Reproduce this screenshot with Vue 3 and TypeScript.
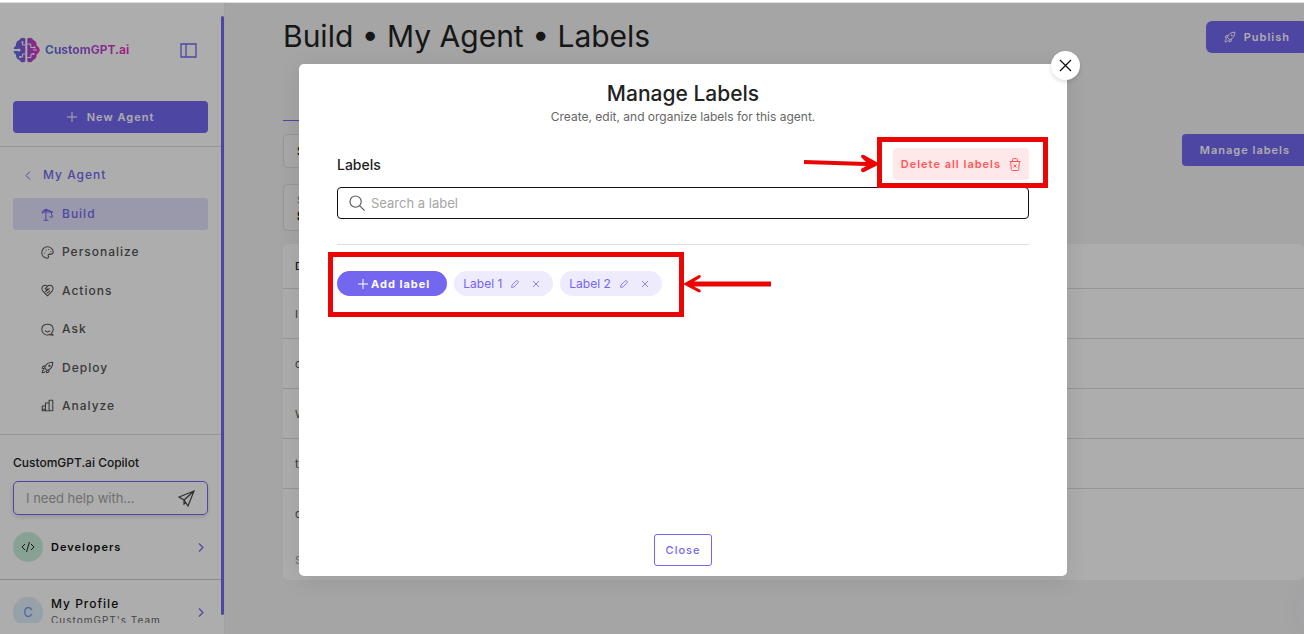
<script setup lang="ts">
import { ref } from 'vue'

interface NavItem {
  name: string
  icon: string[]
  active?: boolean
}

const rocket = [
  'M4.5 8.5C5.5 4.5 9 1.5 14.5 1.5c0 5.500-3 9-7 10z',
  'M5.500 6 2.500 6.500 1.500 9l2.800.4M10 10.500 9.500 13.500 7 14.500 6.600 11.700',
  'M3.500 10.500c-1.500.6-2 2-2 4 2 0 3.400-.5 4-2M9.800 5.200h1.200v1.200h-1.200z',
]

const navItems: NavItem[] = [
  {
    name: 'Build',
    active: true,
    icon: ['M6 15V1.500M3 15h6M1 5h14M1 5 6 1.500 14 5M2 5v2M13 5v3.500M13 8.500c1.500 1 1.500 3-.5 3-1 0-1.500-.6-1.500-1.300'],
  },
  {
    name: 'Personalize',
    icon: ['M8 15C4 15 1 12 1 8s3-7 7-7 7 2.800 7 6c0 2-1.500 3-3 3h-1.500C9 10 8.500 11 9 12.200 9.600 13.500 9.300 15 8 15z', 'M4.100 8.500h1.200M5.500 5.200h1.200M9 4.400h1.200M11.500 6.700h1.200'],
  },
  {
    name: 'Actions',
    icon: ['M8 14.500 2.300 8.700C-.5 5.500 1.800 1.500 5 1.500c1.500 0 2.400.6 3 1.500.6-.9 1.500-1.500 3-1.500 3.200 0 5.500 4 2.700 7.200z', 'M8 3 5.200 5.700c.7 1.300 2.200 1 3-.2M5 9.500 10.500 5.500M7 11.500l4-3'],
  },
  {
    name: 'Ask',
    icon: ['M12.500 12.800 15 15l-4.300-.7C6 16 1 13 1 8s3-6.500 7-6.500S15 4 15 8c0 1.800-.9 3.600-2.500 4.800z', 'M4.800 9.500c1.800 1.700 4.600 1.700 6.400 0'],
  },
  { name: 'Deploy', icon: rocket },
  {
    name: 'Analyze',
    icon: ['M1 14.500h14M1.500 14.500V8.500h4v6M5.500 14.500V5h4.500v9.500M10 14.500v-13h4.500v13M2 12.500h3'],
  },
]

const rows = ['I', 'c', 'W', 't', 'c']
const labels = ref(['Label 1', 'Label 2'])
const search = ref('')
const question = ref('')
</script>

<template>
  <div class="page">
    <aside class="sidebar">
      <div class="side-content">
        <div class="brand-row">
          <a class="brand" href="#">
            <svg class="brain" viewBox="0 0 27 26" aria-hidden="true">
              <defs>
                <linearGradient id="brand-fill" gradientUnits="userSpaceOnUse" x1="0" y1="0" x2="27" y2="0">
                  <stop offset="0" stop-color="#5578e6" />
                  <stop offset=".4" stop-color="#8658dc" />
                  <stop offset="1" stop-color="#f02bbd" />
                </linearGradient>
              </defs>
              <path fill="url(#brand-fill)" d="M12.300 1.500C10 0 7.500.6 6.500 3 4 3.500 2.700 5.800 3 8.500 1.500 9.500.8 11 .6 12H5v2H.6C.8 15.500 1.500 16.500 3 17.500c-.3 2.500 1 4.800 3.500 5.500 1 2.400 3.500 3 5.800 1.500zM14.300 1.500c2.300-1.500 4.800-.9 5.800 1.500 2.500.5 3.800 2.800 3.500 5.500 1.800 1 2.900 2.800 3.200 4.500-.3 1.700-1.400 3.500-3.200 4.500.3 2.500-1 4.800-3.500 5.500-1 2.400-3.500 3-5.800 1.500z" />
              <path fill="none" stroke="#fff" d="M12.300 8H9.500V5.500M12.300 17H9.500v3H7M14.300 7h3.500v3.500h3.500M14.300 20.500H18v-3.500h2.500M24 13h-4" />
              <g fill="#fff"><circle cx="6" cy="13" r="1.500" /><circle cx="9.500" cy="5.300" r="1.100" /><circle cx="7" cy="20" r="1" /><circle cx="20.500" cy="17" r="1.100" /><circle cx="21.500" cy="10.500" r="1.100" /></g>
            </svg>
            <span class="brand-name">CustomGPT.ai</span>
          </a>
          <button class="plain" type="button" aria-label="Toggle sidebar">
            <svg width="17" height="15" viewBox="0 0 17 15" class="line purple"><path d="M1 1h15v13H1zM6 1v13" stroke-width="1.300" /></svg>
          </button>
        </div>

        <button class="primary new-agent" type="button">
          <svg width="10" height="10" viewBox="0 0 10 10" class="line"><path d="M5 0v10M0 5h10" /></svg>
          New Agent
        </button>

        <div class="nav-block">
          <a class="back" href="#">
            <svg width="6" height="9" viewBox="0 0 6 9" class="line"><path d="M5 .5 1 4.500 5 8.500" /></svg>
            My Agent
          </a>
          <nav class="nav">
            <a v-for="item in navItems" :key="item.name" href="#" class="nav-item" :class="{ active: item.active }">
              <svg width="13" height="13" viewBox="0 0 16 16" class="line nav-icon"><path v-for="d in item.icon" :key="d" :d="d" /></svg>
              {{ item.name }}
            </a>
          </nav>
        </div>

        <div class="copilot">
          <label for="copilot">CustomGPT.ai Copilot</label>
          <div class="ask-box">
            <input id="copilot" v-model="question" type="text" placeholder="I need help with..." />
            <button class="plain send" type="button" aria-label="Send">
              <svg width="17" height="17" viewBox="0 0 17 17" class="line"><path d="M16 1 1 7l5 3 4 6zM16 1 6 10M6 10v4l2-1.500" stroke-width="1.200" /></svg>
            </button>
          </div>
          <a class="side-link" href="#">
            <span class="disc green"><svg width="14" height="12" viewBox="0 0 14 12" class="line"><path d="M4 3 1 6l3 3M10 3l3 3-3 3M8.500 1l-3 10" /></svg></span>
            <span class="strong">Developers</span>
            <svg width="6" height="9" viewBox="0 0 6 9" class="line purple"><path d="M1 .5 5 4.500 1 8.500" stroke-width="1.200" /></svg>
          </a>
        </div>

        <a class="side-link profile" href="#">
          <span class="disc blue">C</span>
          <span class="who"><span class="name">My Profile</span><span class="team">CustomGPT's Team</span></span>
          <svg width="6" height="9" viewBox="0 0 6 9" class="line purple"><path d="M1 .5 5 4.500 1 8.500" stroke-width="1.200" /></svg>
        </a>
      </div>
      <div class="scroll-bar"></div>
    </aside>

    <main class="main">
      <header class="head">
        <h1>Build • My Agent • Labels</h1>
        <button class="primary publish" type="button">
          <svg width="12" height="12" viewBox="0 0 16 16" class="line nav-icon"><path v-for="d in rocket" :key="d" :d="d" /></svg>
          Publish
        </button>
      </header>
      <div class="tab-line"></div>
      <div class="tools">
        <button class="field" type="button">S</button>
        <button class="primary" type="button">Manage labels</button>
      </div>
      <button class="field tall" type="button"><span>S</span><b>S</b></button>
      <table class="docs">
        <thead><tr><th scope="col">D</th></tr></thead>
        <tbody><tr v-for="(row, i) in rows" :key="i"><td>{{ row }}</td></tr></tbody>
        <tfoot><tr><td>S</td></tr></tfoot>
      </table>
      <div class="chat-bubble"></div>
    </main>

    <div class="overlay">
      <section class="modal" role="dialog" aria-modal="true" aria-labelledby="modal-title">
        <button class="close-x" type="button" aria-label="Close dialog">
          <svg width="11" height="11" viewBox="0 0 11 11" class="line"><path d="m0 0 11 11M11 0 0 11" stroke-width="1.300" /></svg>
        </button>
        <h2 id="modal-title">Manage Labels</h2>
        <p class="sub">Create, edit, and organize labels for this agent.</p>
        <div class="label-head">
          <label for="search">Labels</label>
          <button class="delete" type="button">
            Delete all labels
            <svg width="12" height="13" viewBox="0 0 12 13" class="line"><path d="M.5 3.500h11M1.700 3.500l.6 8q.1 1 1 1h5.400q.9 0 1-1l.6-8M3.500 3.500V1.700Q3.500.6 4.500.6h3q1 0 1 1.100v1.800M4.600 6.500l2.800 3M7.400 6.500l-2.800 3" /></svg>
          </button>
        </div>
        <div class="search-box">
          <svg width="16" height="16" viewBox="0 0 17 17" class="line"><circle cx="7" cy="7" r="6" stroke-width="1.200" /><path d="m11.500 11.500 5 5" stroke-width="1.200" /></svg>
          <input id="search" v-model="search" type="text" placeholder="Search a label" />
        </div>
        <div class="chips">
          <button class="add" type="button">
            <svg width="10" height="10" viewBox="0 0 10 10" class="line"><path d="M5 0v10M0 5h10" /></svg>
            Add label
          </button>
          <span v-for="label in labels" :key="label" class="chip">
            {{ label }}
            <button class="plain" type="button" :aria-label="`Edit ${label}`">
              <svg width="8" height="8" viewBox="0 0 8 8" class="line"><path d="M.6 7.400 1 5 5.200.9Q6 .3 6.800 1t.2 1.800L3 7z" stroke-width=".8" /></svg>
            </button>
            <button class="plain remove" type="button" :aria-label="`Remove ${label}`">
              <svg width="6" height="6" viewBox="0 0 6 6" class="line"><path d="m0 0 6 6M6 0 0 6" stroke-width=".8" /></svg>
            </button>
          </span>
        </div>
        <button class="close" type="button">Close</button>

        <div class="mark mark-delete"></div>
        <div class="mark mark-chips"></div>
        <svg class="arrow arrow-delete" viewBox="0 0 76 20" aria-hidden="true"><path d="M0 7 62 9 57 4Q57 1 60 2L76 11 60 19Q57 20 57 16L62 13 0 11z" fill="#eb0606" /></svg>
        <svg class="arrow arrow-chips" viewBox="0 0 88 20" aria-hidden="true"><path d="M88 7.500H11L17 4Q19 1 16 1L0 10 16 18.500Q19 18 17 15.500L11 12.500H88z" fill="#eb0606" /></svg>
      </section>
    </div>
  </div>
</template>

<style>
body {
  margin: 0;
  overflow: hidden;
}
</style>

<style scoped>
* {
  box-sizing: border-box;
}
.page {
  position: relative;
  display: flex;
  height: 100vh;
  padding-top: 3px;
  overflow: hidden;
  background: #fff;
  color: #222;
  font: 13px/16px Inter, "Liberation Sans", sans-serif;
}
button,
input {
  margin: 0;
  padding: 0;
  border: 0;
  background: none;
  color: inherit;
  font: inherit;
  letter-spacing: inherit;
}
input {
  outline: 0;
  flex: 1;
  min-width: 0;
}
input::placeholder {
  color: #a5a5a5;
  opacity: 1;
}
a {
  color: inherit;
  text-decoration: none;
}
.line {
  flex: none;
  fill: none;
  stroke: currentColor;
  display: block;
  overflow: visible;
}
.nav-icon {
  stroke-width: 1.300;
  stroke-linejoin: round;
}
.purple {
  color: #7367f0;
}
.primary {
  display: flex;
  align-items: center;
  justify-content: center;
  height: 32px;
  padding: 0 18px;
  border-radius: 4px;
  background: #7367f0;
  color: #fff;
  font-size: 11px;
  font-weight: 600;
  letter-spacing: 1px;
}

.sidebar {
  display: flex;
  flex: none;
  width: 225px;
  border-right: 1px solid #eee;
  padding-bottom: 11px;
  background: #fff;
}
.side-content {
  flex: 1;
  min-width: 0;
  overflow: hidden;
}
.scroll-bar {
  width: 3px;
  margin: 13px 0 8px;
  border-radius: 2px;
  background: #7367f0;
}
.brand-row {
  display: flex;
  align-items: center;
  justify-content: space-between;
  height: 94px;
  padding: 0 24px 0 13px;
}
.brand {
  display: flex;
  align-items: center;
  gap: 5px;
}
.brain {
  width: 27px;
  height: 26px;
}
.brand-name {
  background: linear-gradient(90deg, #4b76e0, #a450dd 50%, #f02bbd);
  background-clip: text;
  color: transparent;
  font-size: 12px;
  font-weight: 700;
}
.new-agent {
  width: calc(100% - 26px);
  margin: 4px 13px 13px;
  gap: 10px;
}
.nav-block {
  border-top: 1px solid #ddd;
  border-bottom: 1px solid #ddd;
  padding: 12px 13px;
}
.back {
  display: flex;
  align-items: center;
  gap: 12px;
  height: 32px;
  padding-left: 12px;
  color: #7367f0;
  font-size: 12px;
  font-weight: 500;
  letter-spacing: 1px;
}
.nav {
  display: flex;
  flex-direction: column;
  justify-content: space-between;
  height: 224px;
  margin-top: 7px;
}
.nav-item {
  display: flex;
  align-items: center;
  gap: 8px;
  height: 32px;
  padding-left: 28px;
  border-radius: 3px;
  color: #555;
  font-size: 12px;
  font-weight: 500;
  letter-spacing: 1px;
}
.nav-item.active {
  background: #e3e0fc;
  color: #7367f0;
}
.copilot {
  display: flex;
  flex-direction: column;
  padding: 20px 13px 17px;
  font-size: 12px;
}
.copilot label {
  font-weight: 500;
}
.ask-box {
  display: flex;
  align-items: center;
  height: 34px;
  margin: 10px 0 17px;
  padding: 0 12px;
  border: 1px solid #7367f0;
  border-radius: 5px;
  box-shadow: 0 2px 4px #0002;
  font-size: 13px;
}
.send {
  color: #444;
}
.side-link {
  display: flex;
  align-items: center;
  gap: 8px;
  padding-right: 4px;
}
.disc {
  display: grid;
  flex: none;
  place-items: center;
  width: 30px;
  height: 30px;
  border-radius: 50%;
}
.green {
  background: #c8eedc;
}
.blue {
  background: #dfedfa;
  color: #7197f0;
  font-size: 13px;
}
.strong,
.who {
  flex: 1;
  color: #111;
  font-weight: 600;
  letter-spacing: 1px;
}
.strong {
  font-size: 11px;
}
.name {
  font-size: 12px;
  font-weight: 500;
}
.who {
  display: flex;
  flex-direction: column;
}
.team {
  color: #666;
  font-size: 10px;
  font-weight: 400;
}
.profile {
  border-top: 1px solid #ccc;
  padding: 16px 17px 0 13px;
}

.main {
  position: relative;
  flex: 1;
  min-width: 0;
  padding-left: 58px;
  overflow: hidden;
  background: #f3f3f3;
}
.head,
.tools {
  display: flex;
  justify-content: space-between;
  margin-right: -4px;
}
.head {
  height: 117px;
  padding-top: 18px;
}
h1 {
  margin: 0;
  font-size: 30px;
  font-weight: 400;
  line-height: 30px;
}
.publish {
  border-radius: 6px;
  gap: 8px;
}
.tab-line {
  width: 120px;
  height: 1px;
  margin-bottom: 13px;
  background: #7367f0;
}
.tools {
  height: 50px;
}
.field {
  width: 400px;
  height: 34px;
  padding: 0 13px;
  border: 1px solid #ddd;
  border-radius: 5px;
  background: #f8f8f8;
  font-weight: 600;
  text-align: left;
}
.tall {
  display: flex;
  flex-direction: column;
  justify-content: center;
  height: 47px;
}
.tall span {
  color: #777;
  font-size: 11px;
  font-weight: 400;
}
.docs {
  width: 100%;
  margin-top: 13px;
  border-collapse: separate;
  border-spacing: 0;
  border-radius: 5px;
  background: #fff;
  font-size: 11px;
  text-align: left;
}
.docs th,
.docs td {
  height: 50px;
  padding: 0 12px;
  border-bottom: 1px solid #ddd;
  color: #555;
}
.docs th {
  height: 45px;
  color: #222;
  font-weight: 500;
}
.docs tbody tr:last-child td,
.docs tfoot td {
  border: 0;
}
.docs tfoot td {
  height: 41px;
  color: #999;
}
.chat-bubble {
  position: absolute;
  right: -54px;
  bottom: -6px;
  width: 60px;
  height: 60px;
  border-radius: 50%;
  background: #f2f2f5;
  box-shadow: 0 0 30px #00000008;
}

.overlay {
  position: absolute;
  inset: 3px 0 0;
  padding: 61px 0 0 62px;
  background: rgb(0 0 0 / 32%);
  box-shadow: 0 -1px #ddd;
}
.modal {
  position: relative;
  display: flex;
  flex-direction: column;
  width: 768px;
  max-width: 100%;
  min-height: 512px;
  margin: 0 auto;
  padding: 18px 38px 10px;
  border-radius: 5px;
  background: #fff;
  box-shadow: 0 4px 24px #00000018;
}
.close-x {
  position: absolute;
  top: -13px;
  right: -13px;
  display: grid;
  place-items: center;
  width: 29px;
  height: 29px;
  border-radius: 50%;
  background: #fff;
  box-shadow: 0 2px 4px #0002;
  color: #111;
}
h2 {
  margin: 0;
  font-size: 21px;
  font-weight: 500;
  line-height: 24px;
  text-align: center;
}
.sub {
  margin: 3px 0 23px;
  color: #666;
  font-size: 12px;
  text-align: center;
}
.label-head {
  display: flex;
  align-items: center;
  justify-content: space-between;
  height: 32px;
  margin-bottom: 7px;
}
.label-head label {
  padding-top: 2px;
  font-size: 14px;
  font-weight: 500;
}
.delete {
  display: flex;
  align-items: center;
  gap: 8px;
  height: 32px;
  padding: 0 8px;
  border-radius: 4px;
  background: #ffe8e9;
  color: #ff5557;
  font-size: 11px;
  font-weight: 600;
  letter-spacing: 1px;
}
.search-box {
  display: flex;
  align-items: center;
  gap: 6px;
  height: 32px;
  padding: 0 11px;
  border: 1px solid #111;
  border-radius: 4px;
  color: #555;
}
.chips {
  display: flex;
  gap: 7px;
  margin-top: 25px;
  padding-top: 26px;
  border-top: 1px solid #ddd;
}
.add,
.chip {
  display: flex;
  align-items: center;
  height: 25px;
  border-radius: 13px;
}
.add {
  gap: 3px;
  padding: 0 17px 0 21px;
  background: #7367f0;
  color: #fff;
  font-size: 11px;
  font-weight: 700;
  letter-spacing: 1px;
}
.chip {
  padding: 0 14px 0 9px;
  gap: 9px;
  background: #eeebfd;
  color: #7367f0;
  font-size: 12px;
}
.remove {
  margin-left: 5px;
}
.close {
  align-self: center;
  height: 32px;
  margin-top: auto;
  padding: 0 11px;
  border: 1px solid #7367f0;
  border-radius: 3px;
  color: #7367f0;
  font-size: 11px;
  font-weight: 500;
  letter-spacing: 1px;
}
.mark {
  position: absolute;
  border: 5px solid #eb0606;
  pointer-events: none;
}
.mark-delete {
  top: 73px;
  right: 19px;
  width: 171px;
  height: 51px;
}
.mark-chips {
  top: 188px;
  left: 29px;
  width: 356px;
  height: 65px;
}
.arrow {
  position: absolute;
  height: 20px;
}
.arrow-delete {
  top: 89px;
  right: 187px;
  width: 76px;
}
.arrow-chips {
  top: 210px;
  left: 384px;
  width: 88px;
}
</style>
